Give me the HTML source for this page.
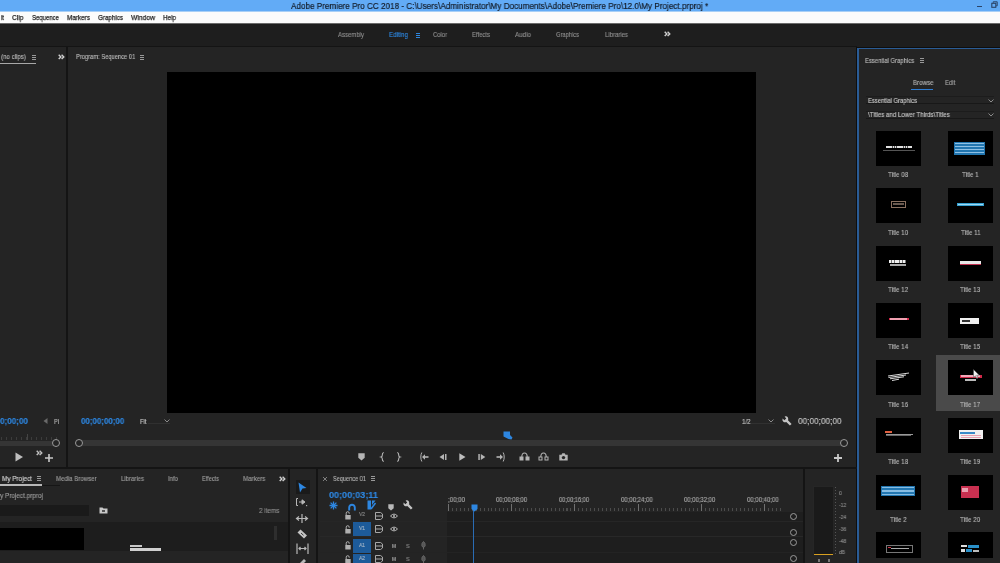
<!DOCTYPE html>
<html><head><meta charset="utf-8">
<style>
*{margin:0;padding:0;box-sizing:border-box}
html,body{width:1000px;height:563px;overflow:hidden;background:#1e1e1e;font-family:"Liberation Sans",sans-serif}
.a{position:absolute}
.t{position:absolute;white-space:pre;line-height:1;transform-origin:0 0;will-change:transform;-webkit-text-stroke-width:0.15px}
.th{position:absolute;width:45px;height:35px;background:#000}
svg{position:absolute;overflow:visible}
</style></head><body>
<!-- title bar -->
<div class="a" style="left:0;top:0;width:1000px;height:11px;background:#62abf6"></div>
<div class="a" style="left:977px;top:5.5px;width:5px;height:1.5px;background:#2a4468"></div>
<svg style="left:990.5px;top:1px" width="7" height="7"><path d="M2.2 1.8 V0.8 H6.2 V4.8 H5.2" stroke="#2a4468" stroke-width="1" fill="none"/><rect x="0.8" y="2.3" width="4" height="4" stroke="#2a4468" stroke-width="1.1" fill="none"/></svg>

<!-- menu bar -->
<div class="a" style="left:0;top:11px;width:1000px;height:12px;background:#fbfbfb"></div>
<div class="a" style="left:0;top:11px;width:1000px;height:1px;background:#a8cff6"></div>
<div class="a" style="left:0;top:23px;width:1000px;height:1px;background:#6a6a6a"></div>
<!-- workspace bar -->
<div class="a" style="left:0;top:24px;width:1000px;height:23px;background:#1e1e1e"></div>

<!-- panels background -->
<div class="a" style="left:0;top:47px;width:66px;height:420px;background:#242424"></div>
<div class="a" style="left:68px;top:47px;width:788px;height:420px;background:#242424"></div>
<div class="a" style="left:856px;top:47px;width:144px;height:516px;background:#0e0e0e"></div>
<div class="a" style="left:857px;top:48px;width:143px;height:515px;background:#242424;border-left:2px solid #2a5c96;border-top:1.5px solid #2a5c96"></div>
<div class="a" style="left:0;top:469px;width:288px;height:94px;background:#242424"></div>
<div class="a" style="left:290px;top:469px;width:26px;height:94px;background:#242424"></div>
<div class="a" style="left:318px;top:469px;width:485px;height:94px;background:#242424"></div>
<div class="a" style="left:805px;top:469px;width:51px;height:94px;background:#242424"></div>

<!-- program video -->
<div class="a" style="left:167px;top:72px;width:589px;height:341px;background:#000"></div>


<!-- dividers / header line -->
<div class="a" style="left:0;top:46px;width:857px;height:1px;background:#141414"></div>
<div class="a" style="left:66px;top:47px;width:2px;height:421px;background:#141414"></div>
<div class="a" style="left:0;top:467px;width:857px;height:2px;background:#141414"></div>
<div class="a" style="left:288px;top:468px;width:2px;height:95px;background:#141414"></div>
<div class="a" style="left:316px;top:468px;width:2px;height:95px;background:#141414"></div>
<div class="a" style="left:803px;top:468px;width:2px;height:95px;background:#141414"></div>

<!-- workspace icons -->
<div class="a" style="left:416px;top:33px;width:4px;height:1px;background:#2e86de;box-shadow:0 2px 0 #2e86de,0 4px 0 #2e86de"></div>
<svg style="left:664px;top:31px" width="7" height="6"><path d="M0.7 0.7 L2.9 2.9 L0.7 5.1 M3.6 0.7 L5.8 2.9 L3.6 5.1" stroke="#d0d0d0" stroke-width="1.4" fill="none"/></svg>

<!-- source header -->
<div class="a" style="left:0;top:62.5px;width:36px;height:1.5px;background:#a8a8a8"></div>
<div class="a" style="left:32px;top:55px;width:4px;height:1px;background:#999;box-shadow:0 2px 0 #999,0 4px 0 #999"></div>
<svg style="left:58px;top:53.5px" width="7" height="6"><path d="M0.7 0.7 L2.9 2.9 L0.7 5.1 M3.6 0.7 L5.8 2.9 L3.6 5.1" stroke="#d0d0d0" stroke-width="1.4" fill="none"/></svg>
<!-- program header menu icon -->
<div class="a" style="left:140px;top:55px;width:4px;height:1px;background:#999;box-shadow:0 2px 0 #999,0 4px 0 #999"></div>

<!-- source bottom -->
<svg style="left:43px;top:418px" width="5" height="6"><path d="M4.5 0 L0.5 3 L4.5 6Z" fill="#6a6a6a"/></svg>
<div class="a" style="left:1px;top:437px;width:60px;height:3px;background:repeating-linear-gradient(90deg,#3c3c3c 0 1px,transparent 1px 5px)"></div>
<div class="a" style="left:27px;top:434px;width:1px;height:6px;background:#444"></div>
<div class="a" style="left:0;top:441px;width:58px;height:5px;background:#353535"></div>
<div class="a" style="left:52px;top:439px;width:8px;height:8px;border:1.5px solid #9a9a9a;border-radius:50%;background:#242424"></div>
<svg style="left:15px;top:452px" width="9" height="10"><path d="M0.5 0.5 L8 5 L0.5 9.5Z" fill="#bdbdbd"/></svg>
<svg style="left:36px;top:450px" width="7" height="6"><path d="M0.7 0.7 L2.9 2.9 L0.7 5.1 M3.6 0.7 L5.8 2.9 L3.6 5.1" stroke="#c0c0c0" stroke-width="1.4" fill="none"/></svg>
<svg style="left:44.5px;top:454px" width="8" height="8"><path d="M4 0 V8 M0 4 H8" stroke="#c8c8c8" stroke-width="1.6"/></svg>

<!-- program bottom -->
<svg style="left:164px;top:418.5px" width="6" height="4"><path d="M0.5 0.5 L3 3 L5.5 0.5" stroke="#8a8a8a" stroke-width="1" fill="none"/></svg>
<div class="a" style="left:148px;top:423px;width:22px;height:1px;background:#303030"></div>
<svg style="left:768px;top:418.5px" width="6" height="4"><path d="M0.5 0.5 L3 3 L5.5 0.5" stroke="#8a8a8a" stroke-width="1" fill="none"/></svg>
<div class="a" style="left:751px;top:423px;width:24px;height:1px;background:#303030"></div>
<svg style="left:782px;top:415.5px" width="10" height="11"><path d="M0.6 2.6 L2.4 4.2 L4.2 2.4 L2.6 0.6 Q4.8 -0.2 5.9 1.6 Q6.6 3 6 4.3 L9.6 7.9 L7.9 9.6 L4.3 6 Q3 6.6 1.6 5.9 Q-0.2 4.8 0.6 2.6Z" fill="#c4c4c4"/></svg>
<div class="a" style="left:79px;top:440px;width:764px;height:6px;background:#353535"></div>
<div class="a" style="left:75px;top:439px;width:8px;height:8px;border:1.5px solid #9a9a9a;border-radius:50%;background:#242424"></div>
<div class="a" style="left:840px;top:439px;width:8px;height:8px;border:1.5px solid #9a9a9a;border-radius:50%;background:#242424"></div>
<svg style="left:503px;top:431px" width="10" height="9"><path d="M0.5 0.5 H7 V4 L9.5 6.5 L8.5 8.5 L5.5 8 L0.5 5.5Z" fill="#2d86e0"/></svg>
<svg style="left:834px;top:454px" width="8" height="8"><path d="M4 0 V8 M0 4 H8" stroke="#c8c8c8" stroke-width="1.8"/></svg>
<!-- transport -->
<svg style="left:358px;top:453px" width="7" height="8"><path d="M0.3 0.3 H6.7 V4.8 L3.5 7.6 L0.3 4.8Z" fill="#b4b4b4"/></svg>
<svg style="left:379.5px;top:452px" width="5" height="10"><path d="M3.8 0.5 Q2.2 0.8 2.3 3 Q2.4 4.6 1 5 Q2.4 5.4 2.3 7 Q2.2 9.2 3.8 9.5" stroke="#b4b4b4" stroke-width="1.1" fill="none"/></svg>
<svg style="left:396px;top:452px" width="5" height="10"><path d="M1.2 0.5 Q2.8 0.8 2.7 3 Q2.6 4.6 4 5 Q2.6 5.4 2.7 7 Q2.8 9.2 1.2 9.5" stroke="#b4b4b4" stroke-width="1.1" fill="none"/></svg>
<svg style="left:420px;top:452px" width="9" height="10"><path d="M1.8 0.5 Q0.8 2.5 0.8 5 Q0.8 7.5 1.8 9.5" stroke="#b4b4b4" stroke-width="1" fill="none"/><path d="M8.5 5 H4" stroke="#b4b4b4" stroke-width="1.6"/><path d="M5 2.2 L2 5 L5 7.8Z" fill="#b4b4b4"/></svg>
<svg style="left:439px;top:454px" width="8" height="6"><path d="M5 0 L0.5 3 L5 6Z" fill="#b4b4b4"/><rect x="6" y="0" width="1.5" height="6" fill="#b4b4b4"/></svg>
<svg style="left:459px;top:453px" width="7" height="8"><path d="M0.3 0.3 L6.5 4 L0.3 7.7Z" fill="#bdbdbd"/></svg>
<svg style="left:478px;top:454px" width="8" height="6"><rect x="0.3" y="0" width="1.5" height="6" fill="#b4b4b4"/><path d="M2.8 0 L7.3 3 L2.8 6Z" fill="#b4b4b4"/></svg>
<svg style="left:496px;top:452px" width="9" height="10"><path d="M7.2 0.5 Q8.2 2.5 8.2 5 Q8.2 7.5 7.2 9.5" stroke="#b4b4b4" stroke-width="1" fill="none"/><path d="M0.5 5 H5" stroke="#b4b4b4" stroke-width="1.6"/><path d="M4 2.2 L7 5 L4 7.8Z" fill="#b4b4b4"/></svg>
<svg style="left:519px;top:452px" width="11" height="9"><path d="M2.8 5 Q2.8 1 5.5 1 Q8.2 1 8.2 5" stroke="#b4b4b4" stroke-width="1.1" fill="none"/><rect x="0.5" y="4.5" width="4" height="4" fill="#b4b4b4"/><rect x="6.5" y="4.5" width="4" height="4" fill="#b4b4b4"/></svg>
<svg style="left:538px;top:452px" width="11" height="9"><path d="M2.8 5 Q2.8 1 5.5 1 Q8.2 1 8.2 5" stroke="#b4b4b4" stroke-width="1.1" fill="none"/><rect x="1" y="5" width="3" height="3" stroke="#b4b4b4" stroke-width="1" fill="none"/><rect x="7" y="5" width="3" height="3" stroke="#b4b4b4" stroke-width="1" fill="none"/></svg>
<svg style="left:558.5px;top:453px" width="9" height="8"><path d="M0.3 1.8 H2.5 L3.3 0.3 H5.7 L6.5 1.8 H8.7 V7.5 H0.3Z" fill="#b4b4b4"/><circle cx="4.5" cy="4.6" r="1.7" fill="#242424"/></svg>
<!-- EG panel -->
<div class="a" style="left:920px;top:58px;width:4px;height:1px;background:#999;box-shadow:0 2px 0 #999,0 4px 0 #999"></div>
<div class="a" style="left:911px;top:88.5px;width:22px;height:1.5px;background:#2e7ed6"></div>
<div class="a" style="left:866px;top:96px;width:128px;height:8px;border-top:1px solid #1c1c1c;border-bottom:1px solid #181818"></div>
<div class="a" style="left:866px;top:110.5px;width:128px;height:8.5px;border-top:1px solid #1c1c1c;border-bottom:1px solid #181818"></div>
<svg style="left:988px;top:99px" width="6" height="4"><path d="M0.5 0.5 L3 3 L5.5 0.5" stroke="#8a8a8a" stroke-width="1" fill="none"/></svg>
<svg style="left:988px;top:113px" width="6" height="4"><path d="M0.5 0.5 L3 3 L5.5 0.5" stroke="#8a8a8a" stroke-width="1" fill="none"/></svg>
<div class="a" style="left:935.5px;top:354.5px;width:64.5px;height:56.5px;background:#4a4a4a"></div>
<div class="th" style="left:876px;top:131.0px;height:35.0px"></div>
<div class="th" style="left:948px;top:131.0px;height:35.0px"></div>
<div class="th" style="left:876px;top:188.3px;height:35.0px"></div>
<div class="th" style="left:948px;top:188.3px;height:35.0px"></div>
<div class="th" style="left:876px;top:245.6px;height:35.0px"></div>
<div class="th" style="left:948px;top:245.6px;height:35.0px"></div>
<div class="th" style="left:876px;top:302.9px;height:35.0px"></div>
<div class="th" style="left:948px;top:302.9px;height:35.0px"></div>
<div class="th" style="left:876px;top:360.2px;height:35.0px"></div>
<div class="th" style="left:948px;top:360.2px;height:35.0px"></div>
<div class="th" style="left:876px;top:417.5px;height:35.0px"></div>
<div class="th" style="left:948px;top:417.5px;height:35.0px"></div>
<div class="th" style="left:876px;top:474.8px;height:35.0px"></div>
<div class="th" style="left:948px;top:474.8px;height:35.0px"></div>
<div class="th" style="left:876px;top:532.1px;height:25.5px"></div>
<div class="th" style="left:948px;top:532.1px;height:25.5px"></div>
<!-- thumb contents -->
<div class="a" style="left:886px;top:145.6px;width:26px;height:2.8px;background:repeating-linear-gradient(90deg,#e0e0e0 0 1.6px,#555 1.6px 2.2px)"></div>
<div class="a" style="left:883px;top:149.5px;width:32px;height:1px;background:#555"></div>
<div class="a" style="left:954px;top:142.2px;width:31.3px;height:12.4px;background:#2276b0"></div>
<div class="a" style="left:955px;top:143px;width:29px;height:11px;background:repeating-linear-gradient(180deg,#8ec0e4 0 1.2px,transparent 1.2px 3px)"></div>
<div class="a" style="left:891px;top:201px;width:15px;height:7px;border:1px solid #8a7060"></div>
<div class="a" style="left:893px;top:203px;width:11px;height:2px;background:#6a5a50"></div>
<div class="a" style="left:957px;top:203px;width:27px;height:3px;background:#35a0d0"></div>
<div class="a" style="left:958px;top:204px;width:25px;height:1px;background:#a0d8f0"></div>
<div class="a" style="left:889px;top:260px;width:17px;height:3px;background:repeating-linear-gradient(90deg,#f0f0f0 0 2px,#777 2px 2.8px)"></div>
<div class="a" style="left:890px;top:264px;width:16px;height:1.5px;background:#aaa"></div>
<div class="a" style="left:960px;top:260.6px;width:21px;height:4.7px;background:#e8e8e8;border-bottom:1.2px solid #c03050"></div>
<div class="a" style="left:889px;top:317.6px;width:19.6px;height:2.8px;background:#d02848"></div>
<div class="a" style="left:890px;top:318.4px;width:17px;height:1.2px;background:#f0a0b0"></div>
<div class="a" style="left:960px;top:318px;width:18.5px;height:5.8px;background:#f0f0f0"></div>
<div class="a" style="left:961.5px;top:320px;width:8px;height:2px;background:#333"></div>
<svg style="left:887px;top:372px" width="24" height="11"><path d="M1 4 L22 1 M1.5 5.5 L19 3 M3 6.8 L17 4.8 M5 8.5 L12 7.2" stroke="#d8d8d8" stroke-width="1" fill="none"/></svg>
<div class="a" style="left:959.8px;top:374.6px;width:21.8px;height:3.4px;background:#d02848"></div>
<div class="a" style="left:961px;top:375.4px;width:19px;height:1.4px;background:#f0a8b8"></div>
<div class="a" style="left:965px;top:378.5px;width:11px;height:2px;background:#bbb"></div>
<svg style="left:973px;top:369px" width="7" height="10"><path d="M0.5 0.5 V8.5 L2.4 6.8 L3.8 9.6 L5 9 L3.7 6.2 L6.3 6.2Z" fill="#f0f0f0" stroke="#444" stroke-width="0.5"/></svg>
<div class="a" style="left:885px;top:430.7px;width:6.5px;height:2.2px;background:#e06040"></div>
<div class="a" style="left:886px;top:433.5px;width:27px;height:1px;background:#999"></div>
<div class="a" style="left:886px;top:435px;width:25px;height:1px;background:#666"></div>
<div class="a" style="left:959.2px;top:430.1px;width:23.6px;height:8.7px;background:#f0f0f0"></div>
<div class="a" style="left:960px;top:431.5px;width:15px;height:2px;background:#3a8ac8"></div>
<div class="a" style="left:961px;top:434.5px;width:20px;height:3px;background:repeating-linear-gradient(180deg,#e8a0b0 0 1px,transparent 1px 2px)"></div>
<div class="a" style="left:881px;top:485.7px;width:33.8px;height:10.7px;background:#2276b0"></div>
<div class="a" style="left:882px;top:486.5px;width:32px;height:10px;background:repeating-linear-gradient(180deg,#86bce2 0 1.2px,transparent 1.2px 3.3px)"></div>
<div class="a" style="left:961px;top:486.2px;width:17.5px;height:11.5px;background:#c83050"></div>
<div class="a" style="left:962px;top:487.5px;width:6px;height:4px;background:#e8a0b0"></div>
<div class="a" style="left:886.3px;top:545px;width:26.5px;height:8px;border:1px solid #777"></div>
<div class="a" style="left:888px;top:547px;width:3px;height:1.2px;background:#d03040"></div>
<div class="a" style="left:891px;top:547.5px;width:18px;height:1px;background:#aaa"></div>
<div class="a" style="left:961.4px;top:545px;width:6px;height:2px;background:#ddd"></div>
<div class="a" style="left:968px;top:545px;width:11px;height:3px;background:#2a90c8"></div>
<div class="a" style="left:961.4px;top:549px;width:4px;height:3px;background:#ddd"></div>
<div class="a" style="left:966px;top:549px;width:6px;height:3px;background:#2a90c8"></div>
<div class="a" style="left:973px;top:549.5px;width:6px;height:2.5px;background:#bbb"></div>
<!-- project panel -->
<div class="a" style="left:0;top:484px;width:42px;height:2px;background:#b8b8b8"></div>
<div class="a" style="left:42px;top:485px;width:18px;height:1px;background:#161616"></div>
<div class="a" style="left:37px;top:476px;width:4px;height:1px;background:#999;box-shadow:0 2px 0 #999,0 4px 0 #999"></div>
<svg style="left:279px;top:476px" width="7" height="6"><path d="M0.7 0.7 L2.9 2.9 L0.7 5.1 M3.6 0.7 L5.8 2.9 L3.6 5.1" stroke="#d0d0d0" stroke-width="1.4" fill="none"/></svg>
<div class="a" style="left:0;top:505px;width:89px;height:11px;background:#1a1a1a"></div>
<svg style="left:99px;top:507px" width="9" height="7"><path d="M0.5 0.5 H3.5 L4.5 1.5 H8.5 V6.5 H0.5Z" fill="#c8c8c8"/><rect x="3" y="3" width="3" height="2" fill="#555"/></svg>
<div class="a" style="left:0;top:522px;width:288px;height:29px;background:#1d1d1d"></div>
<div class="a" style="left:0;top:528px;width:84px;height:22px;background:#000"></div>
<div class="a" style="left:130px;top:545px;width:12px;height:2px;background:#c8c8c8"></div>
<div class="a" style="left:130px;top:548px;width:31px;height:3px;background:#d0d0d0"></div>
<div class="a" style="left:274px;top:526px;width:3px;height:14px;background:#2e2e2e"></div>

<!-- tools -->
<div class="a" style="left:296px;top:480px;width:14px;height:14px;background:#1a1a1a"></div>
<svg style="left:298px;top:482px" width="9" height="11"><path d="M0.5 0.5 L8.5 6 L4.5 6.5 L2 10.5Z" fill="#2d86e0"/></svg>
<svg style="left:296px;top:498px" width="12" height="9"><path d="M0.5 0.5 V7.5 M0.5 0.5 H2 M0.5 7.5 H2 M3 4 H8 M6 1.8 L9 4 L6 6.2Z" stroke="#b8b8b8" stroke-width="1" fill="#b8b8b8"/><rect x="10" y="7" width="1.2" height="1.2" fill="#aaa"/></svg>
<svg style="left:296px;top:514px" width="13" height="9"><path d="M6 0 V9 M0.5 4.5 H11.5 M3 2.5 L0.5 4.5 L3 6.5 M9 2.5 L11.5 4.5 L9 6.5" stroke="#b8b8b8" stroke-width="1.2" fill="none"/></svg>
<svg style="left:297px;top:528.5px" width="11" height="10"><path d="M3.5 0.5 L10 6.5 L7 9.5 L0.5 3.5Z" fill="#c4c4c4"/><path d="M4 4 L6.5 6.3" stroke="#3a3a3a" stroke-width="1"/></svg>
<svg style="left:296px;top:543px" width="13" height="12"><path d="M1 0.5 V11 M12 0.5 V11 M3 5.5 H10 M4.5 4 L3 5.5 L4.5 7 M8.5 4 L10 5.5 L8.5 7" stroke="#b8b8b8" stroke-width="1.2" fill="none"/></svg>
<svg style="left:297px;top:558px" width="10" height="6"><path d="M2 6 L7 1 L9 3 L4 8Z" fill="#b8b8b8"/></svg>

<!-- timeline -->
<svg style="left:322px;top:475.5px" width="6" height="6"><path d="M1 1 L5 5 M5 1 L1 5" stroke="#8a8a8a" stroke-width="0.9"/></svg>
<div class="a" style="left:371px;top:476px;width:4px;height:1px;background:#999;box-shadow:0 2px 0 #999,0 4px 0 #999"></div>
<!-- tool icons row -->
<svg style="left:329px;top:501px" width="9" height="9"><path d="M4.5 0.5 V8.5 M0.5 4.5 H8.5 M1.6 1.6 L7.4 7.4 M7.4 1.6 L1.6 7.4" stroke="#2d86e0" stroke-width="1.3"/></svg>
<svg style="left:348px;top:502.5px" width="8" height="8"><path d="M1.2 7.5 V4.5 A2.8 2.8 0 0 1 6.8 4.5 V7.5" stroke="#2d86e0" stroke-width="1.9" fill="none"/></svg>
<svg style="left:367px;top:500px" width="9" height="10"><path d="M0.5 0.5 H4 V9.5 H0.5Z M5 0.5 H8.5 L5 5Z" fill="#2d86e0"/><path d="M4 9 L8.5 3" stroke="#2d86e0" stroke-width="1.5"/></svg>
<svg style="left:387.5px;top:503.5px" width="6" height="7"><path d="M0.3 0.3 H5.7 V4.3 L3 6.6 L0.3 4.3Z" fill="#b8b8b8"/></svg>
<svg style="left:403px;top:500px" width="10" height="11"><path d="M0.6 2.6 L2.4 4.2 L4.2 2.4 L2.6 0.6 Q4.8 -0.2 5.9 1.6 Q6.6 3 6 4.3 L9.6 7.9 L7.9 9.6 L4.3 6 Q3 6.6 1.6 5.9 Q-0.2 4.8 0.6 2.6Z" fill="#c4c4c4"/></svg>
<!-- track area -->
<div class="a" style="left:447px;top:512px;width:356px;height:51px;background:#1e1e1e"></div>
<div class="a" style="left:320px;top:521px;width:483px;height:1px;background:#262626"></div>
<div class="a" style="left:320px;top:536px;width:483px;height:1px;background:#282828"></div>
<div class="a" style="left:320px;top:552px;width:483px;height:1px;background:#232323"></div>
<!-- ruler ticks -->
<div class="a" style="left:448px;top:507.5px;width:334px;height:3px;background:repeating-linear-gradient(90deg,#4c4c4c 0 1px,transparent 1px 3.95px)"></div>
<div class="a" style="left:448px;top:504px;width:334px;height:7px;background:repeating-linear-gradient(90deg,#707070 0 1px,transparent 1px 63.2px)"></div>
<!-- track heads -->
<div class="a" style="left:353px;top:522px;width:18px;height:14px;background:#1d5b9a"></div>
<div class="a" style="left:353px;top:538.5px;width:18px;height:14px;background:#1d5b9a"></div>
<div class="a" style="left:353px;top:553.5px;width:18px;height:10px;background:#1d5b9a"></div>
<div class="a" style="left:789.5px;top:512.9px;width:7px;height:7px;border:1.5px solid #9a9a9a;border-radius:50%"></div>
<div class="a" style="left:789.5px;top:529.1px;width:7px;height:7px;border:1.5px solid #9a9a9a;border-radius:50%"></div>
<div class="a" style="left:789.5px;top:538.5px;width:7px;height:7px;border:1.5px solid #9a9a9a;border-radius:50%"></div>
<div class="a" style="left:789.5px;top:554.5px;width:7px;height:7px;border:1.5px solid #9a9a9a;border-radius:50%"></div>
<svg style="left:345px;top:511.0px" width="6" height="9"><path d="M1.2 4 V2.2 A1.5 1.5 0 0 1 4.2 2.2 V2.8" stroke="#b0b0b0" stroke-width="1" fill="none"/><rect x="0.3" y="4" width="5.4" height="4.5" fill="#b0b0b0"/></svg>
<svg style="left:374.5px;top:511.5px" width="8" height="8"><path d="M0.5 0.5 H5.5 L7.5 2 V6 L5.5 7.5 H0.5Z M0.5 4 H7.5" stroke="#a8a8a8" stroke-width="1" fill="none"/></svg>
<svg style="left:345px;top:524.5px" width="6" height="9"><path d="M1.2 4 V2.2 A1.5 1.5 0 0 1 4.2 2.2 V2.8" stroke="#b0b0b0" stroke-width="1" fill="none"/><rect x="0.3" y="4" width="5.4" height="4.5" fill="#b0b0b0"/></svg>
<svg style="left:374.5px;top:525.0px" width="8" height="8"><path d="M0.5 0.5 H5.5 L7.5 2 V6 L5.5 7.5 H0.5Z M0.5 4 H7.5" stroke="#a8a8a8" stroke-width="1" fill="none"/></svg>
<svg style="left:345px;top:541.0px" width="6" height="9"><path d="M1.2 4 V2.2 A1.5 1.5 0 0 1 4.2 2.2 V2.8" stroke="#b0b0b0" stroke-width="1" fill="none"/><rect x="0.3" y="4" width="5.4" height="4.5" fill="#b0b0b0"/></svg>
<svg style="left:374.5px;top:541.5px" width="8" height="8"><path d="M0.5 0.5 H5.5 L7.5 2 V6 L5.5 7.5 H0.5Z M0.5 4 H7.5" stroke="#a8a8a8" stroke-width="1" fill="none"/></svg>
<svg style="left:345px;top:554.5px" width="6" height="9"><path d="M1.2 4 V2.2 A1.5 1.5 0 0 1 4.2 2.2 V2.8" stroke="#b0b0b0" stroke-width="1" fill="none"/><rect x="0.3" y="4" width="5.4" height="4.5" fill="#b0b0b0"/></svg>
<svg style="left:374.5px;top:555.0px" width="8" height="8"><path d="M0.5 0.5 H5.5 L7.5 2 V6 L5.5 7.5 H0.5Z M0.5 4 H7.5" stroke="#a8a8a8" stroke-width="1" fill="none"/></svg>
<svg style="left:389.5px;top:512.5px" width="8" height="6"><path d="M0.5 3 Q4 -0.8 7.5 3 Q4 6.8 0.5 3Z" stroke="#b8b8b8" stroke-width="1" fill="none"/><circle cx="4" cy="3" r="1" fill="#b8b8b8"/></svg>
<svg style="left:389.5px;top:526.0px" width="8" height="6"><path d="M0.5 3 Q4 -0.8 7.5 3 Q4 6.8 0.5 3Z" stroke="#b8b8b8" stroke-width="1" fill="none"/><circle cx="4" cy="3" r="1" fill="#b8b8b8"/></svg>
<svg style="left:421px;top:541.0px" width="5" height="9"><path d="M2.5 0.5 Q4.5 2 4.2 4.5 Q4 6 2.5 6.2 Q1 6 0.8 4.5 Q0.5 2 2.5 0.5Z M2.5 6 V8.5" stroke="#6a6a6a" stroke-width="0.9" fill="#555"/></svg>
<svg style="left:421px;top:554.5px" width="5" height="9"><path d="M2.5 0.5 Q4.5 2 4.2 4.5 Q4 6 2.5 6.2 Q1 6 0.8 4.5 Q0.5 2 2.5 0.5Z M2.5 6 V8.5" stroke="#6a6a6a" stroke-width="0.9" fill="#555"/></svg>
<!-- playhead -->
<div class="a" style="left:473.2px;top:508px;width:1.2px;height:55px;background:#2a6cb4"></div>
<svg style="left:471px;top:503.5px" width="7" height="8"><path d="M0.5 0.5 H6.5 V5 L3.5 7.5 L0.5 5Z" fill="#2d86e0"/></svg>

<!-- audio meter -->
<div class="a" style="left:813px;top:486px;width:21px;height:69px;background:#1a1a1a;border:1px solid #262626"></div>
<div class="a" style="left:814px;top:553.5px;width:19px;height:1.5px;background:#d8a020"></div>
<div class="a" style="left:835px;top:487px;width:1px;height:68px;background:repeating-linear-gradient(180deg,#555 0 1px,transparent 1px 3px)"></div>
<div class="a" style="left:818px;top:559px;width:2px;height:3px;background:#777"></div>
<div class="a" style="left:828px;top:559px;width:2px;height:3px;background:#777"></div>

<!--MORE-->
<div class="t" style="left:291.00px;top:1.30px;font-size:9.8px;color:#141c28;transform:scaleX(0.831);-webkit-text-stroke:0.2px #141c28">Adobe Premiere Pro CC 2018 - C:\Users\Administrator\My Documents\Adobe\Premiere Pro\12.0\My Project.prproj *</div>
<div class="t" style="left:1.00px;top:14.40px;font-size:8.0px;color:#1e1e1e;transform:scaleX(0.750);-webkit-text-stroke:0.25px #1e1e1e">it</div>
<div class="t" style="left:12.00px;top:14.40px;font-size:8.0px;color:#1e1e1e;transform:scaleX(0.834);-webkit-text-stroke:0.25px #1e1e1e">Clip</div>
<div class="t" style="left:32.00px;top:14.40px;font-size:8.0px;color:#1e1e1e;transform:scaleX(0.749);-webkit-text-stroke:0.25px #1e1e1e">Sequence</div>
<div class="t" style="left:67.00px;top:14.40px;font-size:8.0px;color:#1e1e1e;transform:scaleX(0.796);-webkit-text-stroke:0.25px #1e1e1e">Markers</div>
<div class="t" style="left:98.00px;top:14.40px;font-size:8.0px;color:#1e1e1e;transform:scaleX(0.781);-webkit-text-stroke:0.25px #1e1e1e">Graphics</div>
<div class="t" style="left:131.00px;top:14.40px;font-size:8.0px;color:#1e1e1e;transform:scaleX(0.843);-webkit-text-stroke:0.25px #1e1e1e">Window</div>
<div class="t" style="left:163.00px;top:14.40px;font-size:8.0px;color:#1e1e1e;transform:scaleX(0.790);-webkit-text-stroke:0.25px #1e1e1e">Help</div>
<div class="t" style="left:338.00px;top:31.30px;font-size:7px;color:#8c8c8c;transform:scaleX(0.857);">Assembly</div>
<div class="t" style="left:389.00px;top:31.30px;font-size:7px;color:#2e86de;transform:scaleX(0.888);">Editing</div>
<div class="t" style="left:433.00px;top:31.30px;font-size:7px;color:#8c8c8c;transform:scaleX(0.837);">Color</div>
<div class="t" style="left:472.00px;top:31.30px;font-size:7px;color:#8c8c8c;transform:scaleX(0.846);">Effects</div>
<div class="t" style="left:515.00px;top:31.30px;font-size:7px;color:#8c8c8c;transform:scaleX(0.894);">Audio</div>
<div class="t" style="left:556.00px;top:31.30px;font-size:7px;color:#8c8c8c;transform:scaleX(0.821);">Graphics</div>
<div class="t" style="left:605.00px;top:31.30px;font-size:7px;color:#8c8c8c;transform:scaleX(0.856);">Libraries</div>
<div class="t" style="left:1.00px;top:52.50px;font-size:7.4px;color:#b8b8b8;transform:scaleX(0.834);">(no clips)</div>
<div class="t" style="left:75.60px;top:53.30px;font-size:7.4px;color:#b8b8b8;transform:scaleX(0.779);">Program: Sequence 01</div>
<div class="t" style="left:864.80px;top:56.80px;font-size:7.4px;color:#b8b8b8;transform:scaleX(0.797);">Essential Graphics</div>
<div class="t" style="left:912.50px;top:79.40px;font-size:7.2px;color:#b0b0b0;transform:scaleX(0.855);">Browse</div>
<div class="t" style="left:944.70px;top:79.40px;font-size:7.2px;color:#a0a0a0;transform:scaleX(0.831);">Edit</div>
<div class="t" style="left:867.70px;top:96.90px;font-size:7.6px;color:#c4c4c4;transform:scaleX(0.774);">Essential Graphics</div>
<div class="t" style="left:867.70px;top:111.40px;font-size:7.6px;color:#c4c4c4;transform:scaleX(0.814);">\Titles and Lower Thirds\Titles</div>
<div class="t" style="left:888.39px;top:171.40px;font-size:7.8px;color:#b4b4b4;transform:scaleX(0.800);">Title 08</div>
<div class="t" style="left:962.12px;top:171.40px;font-size:7.8px;color:#b4b4b4;transform:scaleX(0.800);">Title 1</div>
<div class="t" style="left:888.39px;top:228.75px;font-size:7.8px;color:#b4b4b4;transform:scaleX(0.800);">Title 10</div>
<div class="t" style="left:960.62px;top:228.75px;font-size:7.8px;color:#b4b4b4;transform:scaleX(0.800);">Title 11</div>
<div class="t" style="left:888.39px;top:286.10px;font-size:7.8px;color:#b4b4b4;transform:scaleX(0.800);">Title 12</div>
<div class="t" style="left:960.39px;top:286.10px;font-size:7.8px;color:#b4b4b4;transform:scaleX(0.800);">Title 13</div>
<div class="t" style="left:888.39px;top:343.45px;font-size:7.8px;color:#b4b4b4;transform:scaleX(0.800);">Title 14</div>
<div class="t" style="left:960.39px;top:343.45px;font-size:7.8px;color:#b4b4b4;transform:scaleX(0.800);">Title 15</div>
<div class="t" style="left:888.39px;top:400.80px;font-size:7.8px;color:#b4b4b4;transform:scaleX(0.800);">Title 16</div>
<div class="t" style="left:960.39px;top:400.80px;font-size:7.8px;color:#b4b4b4;transform:scaleX(0.800);">Title 17</div>
<div class="t" style="left:888.39px;top:458.15px;font-size:7.8px;color:#b4b4b4;transform:scaleX(0.800);">Title 18</div>
<div class="t" style="left:960.39px;top:458.15px;font-size:7.8px;color:#b4b4b4;transform:scaleX(0.800);">Title 19</div>
<div class="t" style="left:890.12px;top:515.50px;font-size:7.8px;color:#b4b4b4;transform:scaleX(0.800);">Title 2</div>
<div class="t" style="left:960.39px;top:515.50px;font-size:7.8px;color:#b4b4b4;transform:scaleX(0.800);">Title 20</div>
<div class="t" style="left:0.00px;top:417.10px;font-size:9px;color:#2d86e0;transform:scaleX(0.902);font-weight:bold">0;00;00</div>
<div class="t" style="left:54.00px;top:417.80px;font-size:7px;color:#b0b0b0;transform:scaleX(0.802);">Pi</div>
<div class="t" style="left:80.50px;top:417.10px;font-size:9px;color:#2d86e0;transform:scaleX(0.883);font-weight:bold">00;00;00;00</div>
<div class="t" style="left:139.50px;top:417.80px;font-size:7px;color:#c0c0c0;transform:scaleX(0.835);">Fit</div>
<div class="t" style="left:742.00px;top:417.80px;font-size:7px;color:#c0c0c0;transform:scaleX(0.883);">1/2</div>
<div class="t" style="left:798.00px;top:417.10px;font-size:9px;color:#c4c4c4;transform:scaleX(0.917);">00;00;00;00</div>
<div class="t" style="left:2.00px;top:474.80px;font-size:7.4px;color:#d4d4d4;transform:scaleX(0.859);">My Project</div>
<div class="t" style="left:56.00px;top:474.80px;font-size:7.2px;color:#9a9a9a;transform:scaleX(0.847);">Media Browser</div>
<div class="t" style="left:121.00px;top:474.80px;font-size:7.2px;color:#9a9a9a;transform:scaleX(0.834);">Libraries</div>
<div class="t" style="left:168.00px;top:474.80px;font-size:7.2px;color:#9a9a9a;transform:scaleX(0.833);">Info</div>
<div class="t" style="left:201.60px;top:474.80px;font-size:7.2px;color:#9a9a9a;transform:scaleX(0.778);">Effects</div>
<div class="t" style="left:242.60px;top:474.80px;font-size:7.2px;color:#9a9a9a;transform:scaleX(0.863);">Markers</div>
<div class="t" style="left:0.00px;top:491.70px;font-size:7.2px;color:#9a9a9a;transform:scaleX(0.889);">y Project.prproj</div>
<div class="t" style="left:258.60px;top:507.30px;font-size:7px;color:#8a8a8a;transform:scaleX(0.904);">2 items</div>
<div class="t" style="left:333.00px;top:474.90px;font-size:7.2px;color:#b0b0b0;transform:scaleX(0.779);">Sequence 01</div>
<div class="t" style="left:328.50px;top:489.70px;font-size:9.6px;color:#2d86e0;transform:scaleX(0.945);font-weight:bold">00;00;03;11</div>
<div class="t" style="left:448.00px;top:497.05px;font-size:6.5px;color:#a8a8a8;transform:scaleX(0.940);">;00;00</div>
<div class="t" style="left:496.00px;top:497.05px;font-size:6.5px;color:#a8a8a8;transform:scaleX(0.903);">00;00;08;00</div>
<div class="t" style="left:559.00px;top:497.05px;font-size:6.5px;color:#a8a8a8;transform:scaleX(0.874);">00;00;16;00</div>
<div class="t" style="left:621.00px;top:497.05px;font-size:6.5px;color:#a8a8a8;transform:scaleX(0.923);">00;00;24;00</div>
<div class="t" style="left:683.80px;top:497.05px;font-size:6.5px;color:#a8a8a8;transform:scaleX(0.908);">00;00;32;00</div>
<div class="t" style="left:746.80px;top:497.05px;font-size:6.5px;color:#a8a8a8;transform:scaleX(0.920);">00;00;40;00</div>
<div class="t" style="left:358.99px;top:512.30px;font-size:5.8px;color:#8a8a8a;transform:scaleX(0.850);">V2</div>
<div class="t" style="left:358.99px;top:525.80px;font-size:5.8px;color:#a8b8c8;transform:scaleX(0.850);">V1</div>
<div class="t" style="left:358.99px;top:542.70px;font-size:5.8px;color:#a8b8c8;transform:scaleX(0.850);">A1</div>
<div class="t" style="left:358.99px;top:556.10px;font-size:5.8px;color:#a8b8c8;transform:scaleX(0.850);">A2</div>
<div class="t" style="left:391.50px;top:542.60px;font-size:6px;color:#b0b0b0;transform:scaleX(0.800);">M</div>
<div class="t" style="left:405.59px;top:542.60px;font-size:6px;color:#8a8a8a;transform:scaleX(0.900);">S</div>
<div class="t" style="left:391.50px;top:556.00px;font-size:6px;color:#b0b0b0;transform:scaleX(0.800);">M</div>
<div class="t" style="left:405.59px;top:556.00px;font-size:6px;color:#8a8a8a;transform:scaleX(0.900);">S</div>
<div class="t" style="left:839.00px;top:490.55px;font-size:5.5px;color:#8a8a8a;transform:scaleX(0.900);">0</div>
<div class="t" style="left:839.00px;top:502.95px;font-size:5.5px;color:#8a8a8a;transform:scaleX(0.900);">-12</div>
<div class="t" style="left:839.00px;top:514.85px;font-size:5.5px;color:#8a8a8a;transform:scaleX(0.900);">-24</div>
<div class="t" style="left:839.00px;top:527.05px;font-size:5.5px;color:#8a8a8a;transform:scaleX(0.900);">-36</div>
<div class="t" style="left:839.00px;top:539.15px;font-size:5.5px;color:#8a8a8a;transform:scaleX(0.900);">-48</div>
<div class="t" style="left:839.00px;top:550.45px;font-size:5.5px;color:#8a8a8a;transform:scaleX(0.900);">dB</div>
</body></html>
